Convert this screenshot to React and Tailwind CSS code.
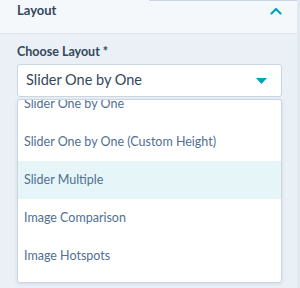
import React from "react";

const options = [
  "Slider One by One",
  "Slider One by One (Custom Height)",
  "Slider Multiple",
  "Image Comparison",
  "Image Hotspots",
];

const ChevronUp = () => (
  <svg width="12" height="8" viewBox="0 0 12 8" fill="none">
    <path d="M1.5 6.5 L6 2 L10.5 6.5" stroke="#00a4bd" strokeWidth="2.2" strokeLinecap="round" strokeLinejoin="round" />
  </svg>
);

const Caret = () => (
  <svg width="11" height="6" viewBox="0 0 11 6">
    <path d="M0 0 H11 L5.5 6 Z" fill="#00a4bd" />
  </svg>
);

function App() {
  const selected = "Slider Multiple";
  return (
    <div className="w-[300px] h-[288px] overflow-hidden bg-[#eaf0f6] font-['Lato',sans-serif] text-[#33475b] border-r-[3px] border-[#e3e9f1]">
      {/* Section header */}
      <div className="h-[34px] bg-[#f5f8fa] border-b border-[#dfe3eb]">
        <div className="h-px ml-[149px] bg-[#cbd6e2]" />
        <div className="h-[19px] flex items-center justify-between pl-[17px] pr-[15px]">
          <span className="text-[13px] font-bold">Layout</span>
          <ChevronUp />
        </div>
      </div>

      <div className="pl-[17px] pr-[15px] pt-[9px]">
        <div className="text-[12.5px] font-bold leading-[18px] h-[21px]">Choose Layout *</div>

        {/* Select */}
        <div className="h-[33px] bg-white border border-[#cbd6e2] rounded-[3px] flex items-center justify-between pl-[8px] pr-[14px]">
          <span className="text-[14.5px] leading-none">Slider One by One</span>
          <Caret />
        </div>

        {/* Dropdown */}
        <div className="mt-[2px] h-[184px] bg-white border border-[#cbd6e2] rounded-[3px] shadow-[0_1px_4px_rgba(45,62,80,0.12)] overflow-hidden">
          <div className="-mt-[15px]">
            {options.map((o) => (
              <div
                key={o}
                className={`h-[38px] flex items-center pl-[6px] text-[12.5px] text-[#516f90] ${
                  o === selected ? "bg-[#e5f5f8]" : ""
                }`}
              >
                {o}
              </div>
            ))}
          </div>
        </div>
      </div>
    </div>
  );
}

export default App;
